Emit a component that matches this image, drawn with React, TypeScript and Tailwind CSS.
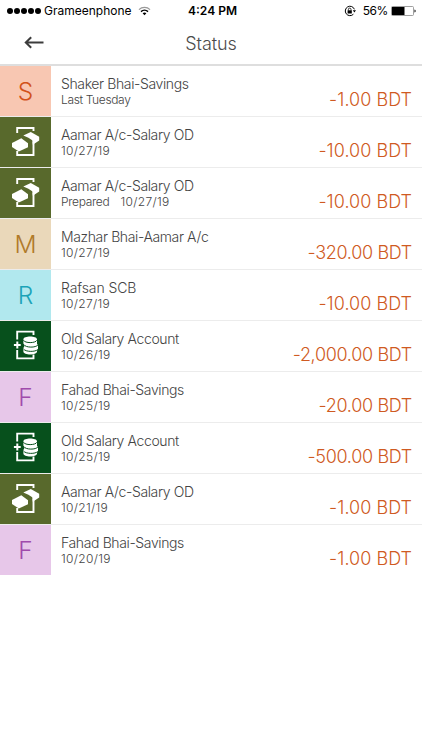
import { ReactElement } from "react";

type Kind = "letter" | "transfer" | "deposit";

type Transaction = {
  kind: Kind;
  letter?: string;
  tile: string;
  name: string;
  status?: string;
  date: string;
  amount: string;
};

const transactions: Transaction[] = [
  { kind: "letter", letter: "S", tile: "bg-[#f8c7b2] text-[#d2521a]", name: "Shaker Bhai-Savings", date: "Last Tuesday", amount: "-1.00" },
  { kind: "transfer", tile: "bg-[#58692c]", name: "Aamar A/c-Salary OD", date: "10/27/19", amount: "-10.00" },
  { kind: "transfer", tile: "bg-[#58692c]", name: "Aamar A/c-Salary OD", status: "Prepared", date: "10/27/19", amount: "-10.00" },
  { kind: "letter", letter: "M", tile: "bg-[#ead8ba] text-[#b07a2a]", name: "Mazhar Bhai-Aamar A/c", date: "10/27/19", amount: "-320.00" },
  { kind: "letter", letter: "R", tile: "bg-[#b1e8ee] text-[#1ba3b8]", name: "Rafsan SCB", date: "10/27/19", amount: "-10.00" },
  { kind: "deposit", tile: "bg-[#07501c]", name: "Old Salary Account", date: "10/26/19", amount: "-2,000.00" },
  { kind: "letter", letter: "F", tile: "bg-[#e7c7e9] text-[#a04bac]", name: "Fahad Bhai-Savings", date: "10/25/19", amount: "-20.00" },
  { kind: "deposit", tile: "bg-[#07501c]", name: "Old Salary Account", date: "10/25/19", amount: "-500.00" },
  { kind: "transfer", tile: "bg-[#58692c]", name: "Aamar A/c-Salary OD", date: "10/21/19", amount: "-1.00" },
  { kind: "letter", letter: "F", tile: "bg-[#e7c7e9] text-[#a04bac]", name: "Fahad Bhai-Savings", date: "10/20/19", amount: "-1.00" },
];

const TransferIcon = () => (
  <svg width="51" height="50" viewBox="0 0 51 50" fill="none">
    <path d="M17.2 16V11H33.5V14M17.2 34V38H33.5V25" stroke="white" strokeWidth="1.9" />
    <path d="M12 26 21.3 21.2 28 26.2V30.2L18.8 34.4 12 30Z" fill="white" />
    <path d="M23.3 18.6 30.8 15 39.2 19.8V23.4L32.8 27.8 32.2 23.2 28.4 20.8Z" fill="white" />
  </svg>
);

const DepositIcon = () => (
  <svg width="51" height="50" viewBox="0 0 51 50" fill="none">
    <path d="M17.2 18.5V10.6H33.5V14M17.2 29V37.4H33.5V33.5" stroke="white" strokeWidth="1.9" />
    <path d="M17.3 20.6V27.4M13.9 24H20.7" stroke="white" strokeWidth="2" />
    <path d="M23.4 18.4C23.4 14.6 37 14.6 37 18.4V22.8L38 24V28.4L37 29.6V30.4C37 34.4 23.4 34.4 23.4 30.4V26.8L24.2 26V23.8L23.4 22.6Z" fill="white" />
    <path d="M23.4 19.2C25 22.4 35.4 22.4 37 19.2M23.8 23.6C25.6 26.8 36 27 38 23.8M23.6 28C25.4 31 35.6 31.2 37.8 28.4" stroke="#07501c" strokeWidth="1" />
  </svg>
);

const Tile = ({ kind, letter, tile }: { kind: Kind; letter?: string; tile: string }) => {
  const icons: Record<Kind, ReactElement> = {
    letter: <span className="text-[24.5px] leading-[51px] font-light">{letter}</span>,
    transfer: <TransferIcon />,
    deposit: <DepositIcon />,
  };
  return <div className={`flex h-[50px] w-[51px] shrink-0 justify-center ${tile}`}>{icons[kind]}</div>;
};

const TransactionRow = ({ item }: { item: Transaction }) => {
  const amountTracking = item.amount.includes("1") ? "tracking-[0.03px]" : "tracking-[-0.32px]";
  const nameTracking = item.name.length > 12 ? "tracking-[-0.38px]" : "tracking-[-0.1px]";
  const dateTracking = item.date.includes("/") ? "tracking-[0.32px]" : "tracking-[-0.36px]";

  return (
    <li className="flex h-[51px] border-b border-[#ececec] last:border-b-0">
      <Tile kind={item.kind} letter={item.letter} tile={item.tile} />
      <div className="flex flex-1 justify-between pr-[10px] pl-[10px]">
        <div className="pt-[9px] whitespace-nowrap text-[#444444]">
          <p className={`text-[14px] leading-[18px] font-light ${nameTracking}`}>{item.name}</p>
          <p className="flex gap-[11px] text-[12px] leading-[14px] font-light">
            {item.status && <span className="tracking-[-0.3px]">{item.status}</span>}
            <span className={dateTracking}>{item.date}</span>
          </p>
        </div>
        <p className={`pt-[22px] text-[18px] leading-[24px] font-light whitespace-nowrap text-[#cf5a22] ${amountTracking}`}>
          {item.amount} BDT
        </p>
      </div>
    </li>
  );
};

const StatusBar = () => {
  return (
    <div className="grid h-[22px] grid-cols-[160px_1fr_160px] items-center pr-[6px] pl-[7px] text-[12px] text-black">
      <div className="flex items-center">
        <div className="flex gap-[1px]">
          {[0, 1, 2, 3, 4].map((dot) => (
            <span key={dot} className="h-[6px] w-[6px] rounded-full bg-black" />
          ))}
        </div>
        <span className="ml-[3px]">Grameenphone</span>
        <svg className="ml-[6px] shrink-0" width="13" height="10" viewBox="0 0 13 10" fill="none">
          <path d="M1 3.6C4 .6 9 .6 12 3.6" stroke="#999" strokeWidth="1.3" />
          <path d="M3 5.6C5 3.7 8 3.7 10 5.6" stroke="black" strokeWidth="1.5" />
          <path d="M4.6 7.2C5.7 6.2 7.3 6.2 8.4 7.2L6.5 9.2Z" fill="black" />
        </svg>
      </div>
      <span className="pl-[2px] text-center font-semibold">4:24 PM</span>
      <div className="flex items-center justify-end">
        <svg width="12" height="12" viewBox="0 0 12 12" fill="none">
          <path d="M10.4 4.3A4.7 4.7 0 1 0 9.4 9.2" stroke="black" />
          <path d="M8.8 5.3H12L10.4 7.5Z" fill="black" />
          <path d="M3.6 5.3H7.8V8.5H3.6Z" fill="black" />
          <path d="M4.4 5.5V4.4A1.3 1.3 0 0 1 7 4.4V5.5" stroke="black" strokeWidth=".8" />
        </svg>
        <span className="ml-[7px] tracking-[-0.4px]">56%</span>
        <svg className="ml-[3px]" width="25" height="10" viewBox="0 0 25 10" fill="none">
          <rect x=".5" y=".5" width="22" height="9" rx="1" stroke="#888" strokeWidth=".8" />
          <path d="M1 1H13.5V9H1Z" fill="black" />
          <path d="M23.5 3.4C25 3.8 25 6.2 23.5 6.6Z" fill="black" />
        </svg>
      </div>
    </div>
  );
};

const App = () => {
  return (
    <div className="h-[750px] w-[422px] overflow-hidden bg-white font-['Inter','Liberation_Sans',sans-serif]">
      <StatusBar />
      <header className="grid h-[44px] grid-cols-3 items-center border-b-2 border-[#dedede]">
        <svg className="ml-[24px]" width="20" height="14" viewBox="0 0 20 14" fill="none">
          <path d="M19.5 6.5H1.5M7.2 1.3 1.8 6.5 7.2 11.7" stroke="#3c3c3c" strokeWidth="2" />
        </svg>
        <h1 className="text-center text-[18px] font-light tracking-[-0.1px] text-[#4c4c4c]">Status</h1>
      </header>
      <ul>
        {transactions.map((item, index) => (
          <TransactionRow key={index} item={item} />
        ))}
      </ul>
    </div>
  );
};

export default App;
